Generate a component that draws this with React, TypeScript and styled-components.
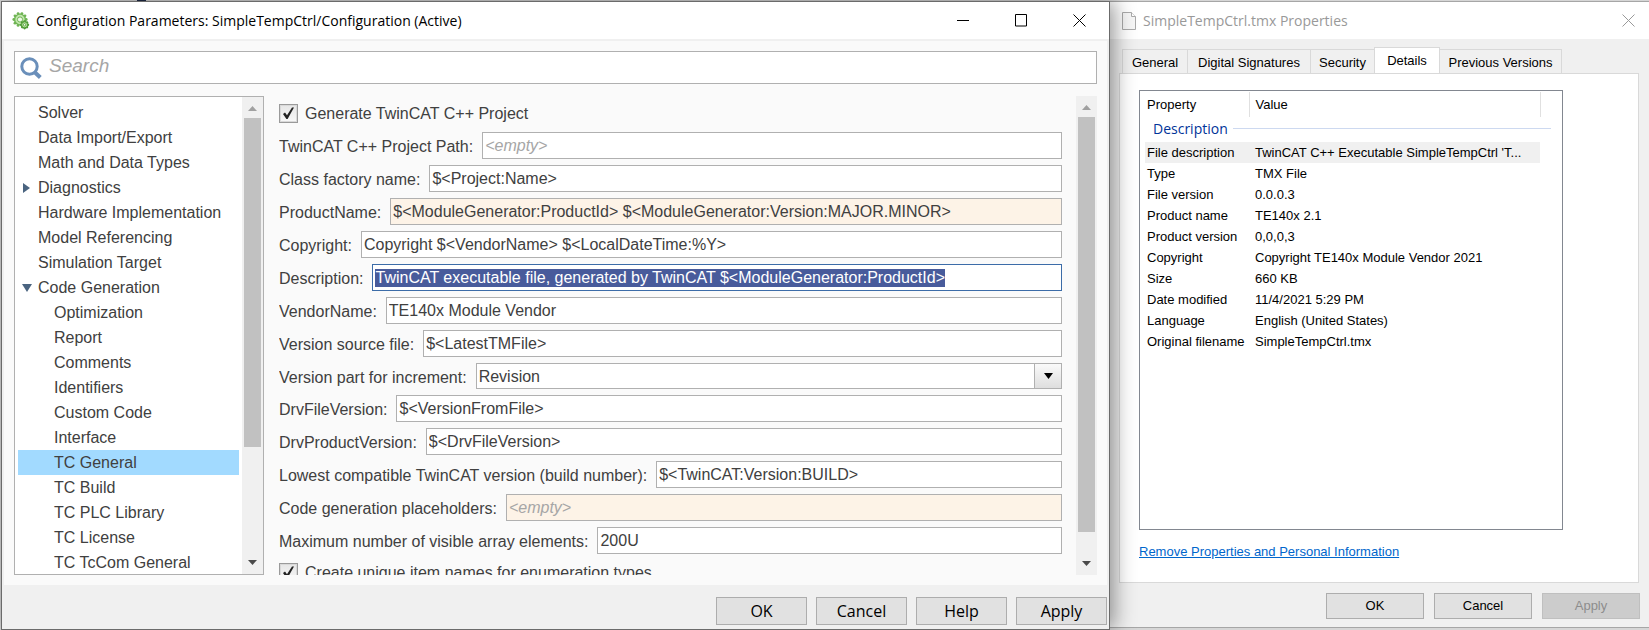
import React, { useEffect, useRef } from "react";
import styled, { createGlobalStyle, css } from "styled-components";

const uiFont = `"Open Sans", "Noto Sans", sans-serif`;
const textFont = `"Liberation Sans", Arial, sans-serif`;

const GlobalStyle = createGlobalStyle`
  *, *::before, *::after { box-sizing: border-box; }
  body { margin: 0; background: #d6d6d6; font-family: ${textFont}; color: #404040; }
  button, input, select { font-family: inherit; margin: 0; }
`;

const Desktop = styled.div`
  display: flex;
  height: 100vh;
  min-height: 480px;
  padding: 1px 0 0 1px;
  background: linear-gradient(90deg, #d6d6d6 137px, #1f2a48 137px, #1f2a48 146px, #d6d6d6 146px);
`;

/* ---------- shared window parts ---------- */

const Win = styled.section<{ $active?: boolean }>`
  display: flex;
  flex-direction: column;
  min-width: 0;
  background: #f0f0f0;
  ${(p) =>
    p.$active
      ? css`
          flex: 1107 1 0;
          position: relative;
          z-index: 1;
          border: 1px solid #6b6b6b;
          box-shadow: 4px 0 20px rgba(0, 0, 0, 0.42);
        `
      : css`
          flex: 539 1 0;
          border: solid #a6a6a6;
          border-width: 1px 0;
          margin-bottom: 2px;
        `}
`;

const TitleBar = styled.header<{ $active?: boolean }>`
  display: flex;
  align-items: center;
  flex: none;
  height: 37px;
  padding: ${(p) => (p.$active ? "0 16px 0 10px" : "0 7px 0 11px")};
  gap: 6px;
  background: #fff;
  color: ${(p) => (p.$active ? "#000" : "#999")};
`;

const Title = styled.h1`
  flex: 1;
  margin: 0;
  font: 400 14px/20px ${uiFont};
  white-space: nowrap;
`;

const CaptionButtons = styled.div<{ $active?: boolean }>`
  display: flex;
  gap: ${(p) => (p.$active ? 30 : 0)}px;
`;

const CaptionButton = styled.button`
  display: grid;
  place-items: center;
  width: 28px;
  height: 28px;
  padding: 0;
  border: 0;
  background: none;
  color: inherit;
`;

const Footer = styled.footer<{ $active?: boolean }>`
  display: flex;
  flex: none;
  justify-content: flex-end;
  gap: ${(p) => (p.$active ? 9 : 10)}px;
  padding: ${(p) => (p.$active ? "12px 2px 4px" : "10px 9px 8px")};
`;

const PushButton = styled.button<{ $large?: boolean }>`
  width: ${(p) => (p.$large ? 91 : 98)}px;
  height: ${(p) => (p.$large ? 28 : 26)}px;
  padding: 0;
  border: 1px solid #adadad;
  background: #e1e1e1;
  color: #000;
  font: ${(p) => (p.$large ? `400 16px/24px ${uiFont}` : `400 13px/20px ${textFont}`)};
  &:disabled {
    border-color: #bfbfbf;
    background: #ccc;
    color: #8c8c8c;
  }
`;

/* ---------- configuration window ---------- */

const ConfigBody = styled.main`
  display: flex;
  flex-direction: column;
  flex: 1;
  min-height: 0;
  gap: 12px;
  margin: 2px 2px 0;
  padding: 10px;
  background: #fafafa;
`;

const SearchBox = styled.label`
  display: flex;
  align-items: center;
  flex: none;
  height: 33px;
  padding: 0 5px;
  gap: 7px;
  border: 1px solid #b0b0b0;
  background: #fff;
`;

const SearchInput = styled.input`
  flex: 1;
  min-width: 0;
  padding: 0 0 4px;
  border: 0;
  outline: 0;
  background: none;
  font-size: 19px;
  line-height: 24px;
  &::placeholder { color: #a6a6a6; font-style: italic; opacity: 1; }
`;

const Columns = styled.div`
  display: flex;
  flex: 1;
  min-height: 0;
  gap: 15px;
`;

const TreePane = styled.nav`
  display: flex;
  flex: none;
  width: 250px;
  border: 1px solid #b0b0b0;
  background: #fff;
`;

const TreeList = styled.ul`
  flex: 1;
  margin: 0;
  padding: 3px;
  list-style: none;
  overflow: hidden;
`;

const TreeItem = styled.li<{ $child?: boolean; $selected?: boolean }>`
  display: flex;
  align-items: center;
  height: 25px;
  padding-left: ${(p) => (p.$child ? 36 : 4)}px;
  background: ${(p) => (p.$selected ? "#a2daff" : "none")};
  font-size: 16px;
  line-height: 24px;
  white-space: nowrap;
`;

const Twisty = styled.svg`
  width: 12px;
  height: 12px;
  margin-right: 4px;
  flex: none;
  fill: #4a6480;
`;

const ScrollTrack = styled.div`
  display: flex;
  flex-direction: column;
  align-items: center;
  flex: none;
  width: 21px;
  background: #f0f0f0;
`;

const ScrollArrow = styled.svg`
  display: block;
  flex: none;
  width: 11px;
  height: 21px;
`;

const ScrollThumb = styled.div<{ $size: number }>`
  flex: ${(p) => p.$size} 0 0;
  width: 17px;
  background: #c1c1c1;
`;

const ScrollRest = styled.div<{ $size: number }>`
  flex: ${(p) => p.$size} 0 0;
`;

const FormPane = styled.form`
  display: flex;
  flex: 1;
  min-width: 0;
  gap: 14px;
`;

const FieldList = styled.div`
  display: flex;
  flex-direction: column;
  flex: 1;
  gap: 6px;
  min-width: 0;
  padding-top: 5px;
  overflow: hidden;
`;

const CheckRow = styled.label`
  display: flex;
  align-items: center;
  flex: none;
  gap: 7px;
  height: 25px;
  font-size: 16px;
  line-height: 24px;
`;

const CheckBox = styled.input`
  appearance: none;
  flex: none;
  width: 19px;
  height: 19px;
  border: 1px solid #9a9a9a;
  box-shadow: inset 0 0 0 1px #d9d9d9;
  background: linear-gradient(#e6e6e6, #f8f8f8);
`;

const CheckFrame = styled.span`
  display: grid;
  > * { grid-area: 1 / 1; }
  > svg { pointer-events: none; }
`;

const Field = styled.div`
  display: flex;
  flex: none;
  gap: 9px;
`;

const FieldLabel = styled.label`
  flex: none;
  height: 26px;
  padding-top: 3px;
  font-size: 16px;
  line-height: 23px;
  white-space: nowrap;
`;

const TextBox = styled.input<{ $tinted?: boolean }>`
  flex: 1;
  min-width: 0;
  height: 27px;
  padding: 0 2px;
  border: 1px solid #b0b0b0;
  outline: 0;
  background: ${(p) => (p.$tinted ? "#fdf3e7" : "#fff")};
  color: #404040;
  font-size: 16px;
  &::placeholder { color: #a6a6a6; font-style: italic; opacity: 1; }
  &:focus { border-color: #3c6ca8; }
  &::selection { background: rgba(70, 89, 154, 0.99); color: #fff; }
`;

const SelectFrame = styled.div`
  display: grid;
  grid-template-columns: 1fr 27px;
  flex: 1;
  height: 26px;
  > select { grid-area: 1 / 1 / 2 / 3; }
  > svg { grid-area: 1 / 2; place-self: center; pointer-events: none; }
`;

const Select = styled.select`
  appearance: none;
  min-width: 0;
  padding: 0 30px 0 2px;
  border: 1px solid #b0b0b0;
  border-radius: 0;
  outline: 0;
  background:
    linear-gradient(#b0b0b0, #b0b0b0) right 26px top / 1px 100% no-repeat,
    linear-gradient(#fafafa, #dedede) right / 26px 100% no-repeat,
    #fff;
  color: #404040;
  font-size: 16px;
`;

/* ---------- properties window ---------- */

const PropsBody = styled.main`
  display: flex;
  flex-direction: column;
  flex: 1;
  min-height: 0;
  padding: 8px 10px 0 9px;
`;

const TabStrip = styled.div`
  display: flex;
  align-items: flex-end;
  flex: none;
  padding-left: 3px;
`;

const Tab = styled.button<{ $width: number; $current?: boolean }>`
  width: ${(p) => p.$width}px;
  height: ${(p) => (p.$current ? 27 : 24)}px;
  margin: ${(p) => (p.$current ? "0 0 -1px -1px" : "0 0 0 -1px")};
  padding: ${(p) => (p.$current ? "0 0 1px" : "3px 0 0")};
  border: 1px solid #d9d9d9;
  border-bottom: 0;
  background: ${(p) => (p.$current ? "#fff" : "#f0f0f0")};
  color: #000;
  font: 400 13px/20px ${textFont};
  white-space: nowrap;
  &:first-child { margin-left: 0; }
`;

const TabPage = styled.div`
  display: flex;
  flex-direction: column;
  align-items: stretch;
  flex: 1;
  min-height: 0;
  padding: 16px 75px 20px 19px;
  border: 1px solid #d9d9d9;
  background: #fff;
`;

const ListBox = styled.div`
  flex: 1;
  min-height: 0;
  padding: 1px 11px 0 5px;
  border: 1px solid #828790;
  overflow: hidden;
`;

const PropTable = styled.table`
  width: 100%;
  table-layout: fixed;
  border-collapse: collapse;
  color: #000;
  font-size: 13px;
  line-height: 20px;
  th, td {
    padding: 0 2px;
    font-weight: 400;
    text-align: left;
    white-space: nowrap;
  }
`;

const HeadCell = styled.th`
  height: 25px;
  &:not(:last-child) { border-right: 1px solid #e0e0e0; }
  &:nth-child(2) { padding-left: 6px; }
`;

const GroupCell = styled.th`
  && { padding: 0 0 0 8px; }
`;

const GroupTitle = styled.span`
  display: flex;
  align-items: center;
  gap: 5px;
  height: 25px;
  padding-bottom: 2px;
  color: #003399;
  font: 400 14px/20px ${uiFont};
  &::after { content: ""; flex: 1; height: 1px; background: #cdd9f0; }
`;

const PropRow = styled.tr<{ $selected?: boolean }>`
  height: 21px;
  > th, > td:nth-child(2) { background: ${(p) => (p.$selected ? "#f0f0f0" : "none")}; }
  > td:nth-child(2) { padding-left: 6px; }
`;

const TextLink = styled.a`
  align-self: flex-start;
  margin-top: 12px;
  color: #0066cc;
  font-size: 13px;
  line-height: 20px;
  white-space: nowrap;
`;

/* ---------- drawings ---------- */

const teeth = (cx: number, cy: number, r: number, n: number) =>
  Array.from({ length: n }, (_, i) => {
    const a = (i * 2 * Math.PI) / n;
    return <circle key={i} cx={cx + r * Math.cos(a)} cy={cy + r * Math.sin(a)} r="1.4" />;
  });

const GearIcon = () => (
  <svg width="18" height="18" viewBox="0 0 18 18" aria-hidden="true">
    <g fill="#6fb454">{teeth(8, 7.5, 6.2, 10)}</g>
    <circle cx="8" cy="7.5" r="5.4" fill="#c3e8ae" stroke="#6fb454" strokeWidth="1.4" />
    <circle cx="8" cy="7.5" r="2.6" fill="#eef8e8" stroke="#6fb454" />
    <g fill="#4d9a35">{teeth(12.6, 12.8, 3.2, 8)}</g>
    <circle cx="12.6" cy="12.8" r="3" fill="#b9e4a0" stroke="#4d9a35" />
    <circle cx="12.6" cy="12.8" r="1.2" fill="#fff" stroke="#4d9a35" strokeWidth=".8" />
  </svg>
);

const SearchIcon = () => (
  <svg width="22" height="22" viewBox="0 0 22 22" fill="none" stroke="#6a8fba" aria-hidden="true">
    <circle cx="9.5" cy="9.5" r="7.7" strokeWidth="3" />
    <path d="M15 15.5l5.3 5" strokeWidth="4" />
  </svg>
);

const FileIcon = () => (
  <svg width="16" height="20" viewBox="0 0 16 20" fill="#f7f7f7" stroke="#aaa" aria-hidden="true">
    <path d="M1.500 1.500h9l4 4v13h-13z" />
    <path d="M10.500 1.500v4h4" fill="#fff" />
  </svg>
);

const Minimize = () => (
  <svg width="12" height="13" stroke="currentColor" aria-hidden="true"><path d="M0 6.5h12" /></svg>
);
const Maximize = () => (
  <svg width="12" height="13" fill="none" stroke="currentColor" aria-hidden="true"><path d="M.5.5h11v11.5h-11z" /></svg>
);
const Close = () => (
  <svg width="13" height="13" stroke="currentColor" aria-hidden="true"><path d="M.5.5l12 12M12.5.5l-12 12" /></svg>
);

const Tick = () => (
  <svg width="19" height="19" viewBox="0 0 19 19" aria-hidden="true">
    <path d="M4 10l2-1.4 2 2.6L13 3.5h2L8.600 15H7.400z" fill="#222" />
  </svg>
);

const ScrollBar = ({ thumb, rest }: { thumb: number; rest: number }) => (
  <ScrollTrack aria-hidden="true">
    <ScrollArrow><path d="M1 14h9L5.500 9z" fill="#a0a0a0" /></ScrollArrow>
    <ScrollThumb $size={thumb} />
    <ScrollRest $size={rest} />
    <ScrollArrow><path d="M1 7h9L5.500 12z" fill="#4a4a4a" /></ScrollArrow>
  </ScrollTrack>
);

/* ---------- data ---------- */

type Node = { text: string; child?: boolean; open?: boolean; selected?: boolean };

const tree: Node[] = [
  { text: "Solver" },
  { text: "Data Import/Export" },
  { text: "Math and Data Types" },
  { text: "Diagnostics", open: false },
  { text: "Hardware Implementation" },
  { text: "Model Referencing" },
  { text: "Simulation Target" },
  { text: "Code Generation", open: true },
  { text: "Optimization", child: true },
  { text: "Report", child: true },
  { text: "Comments", child: true },
  { text: "Identifiers", child: true },
  { text: "Custom Code", child: true },
  { text: "Interface", child: true },
  { text: "TC General", child: true, selected: true },
  { text: "TC Build", child: true },
  { text: "TC PLC Library", child: true },
  { text: "TC License", child: true },
  { text: "TC TcCom General", child: true },
];

type FieldSpec = { label: string; value?: string; tinted?: boolean; focus?: boolean; options?: string[] };

const fields: FieldSpec[] = [
  { label: "TwinCAT C++ Project Path:" },
  { label: "Class factory name:", value: "$<Project:Name>" },
  { label: "ProductName:", value: "$<ModuleGenerator:ProductId> $<ModuleGenerator:Version:MAJOR.MINOR>", tinted: true },
  { label: "Copyright:", value: "Copyright $<VendorName> $<LocalDateTime:%Y>" },
  { label: "Description:", value: "TwinCAT executable file, generated by TwinCAT $<ModuleGenerator:ProductId>", focus: true },
  { label: "VendorName:", value: "TE140x Module Vendor" },
  { label: "Version source file:", value: "$<LatestTMFile>" },
  { label: "Version part for increment:", options: ["Revision"] },
  { label: "DrvFileVersion:", value: "$<VersionFromFile>" },
  { label: "DrvProductVersion:", value: "$<DrvFileVersion>" },
  { label: "Lowest compatible TwinCAT version (build number):", value: "$<TwinCAT:Version:BUILD>" },
  { label: "Code generation placeholders:", tinted: true },
  { label: "Maximum number of visible array elements:", value: "200U" },
];

const tabs = [
  { text: "General", width: 66 },
  { text: "Digital Signatures", width: 124 },
  { text: "Security", width: 65 },
  { text: "Details", width: 66, current: true },
  { text: "Previous Versions", width: 123 },
];

const properties = [
  ["File description", "TwinCAT C++ Executable SimpleTempCtrl 'T..."],
  ["Type", "TMX File"],
  ["File version", "0.0.0.3"],
  ["Product name", "TE140x 2.1"],
  ["Product version", "0,0,0,3"],
  ["Copyright", "Copyright TE140x Module Vendor 2021"],
  ["Size", "660 KB"],
  ["Date modified", "11/4/2021 5:29 PM"],
  ["Language", "English (United States)"],
  ["Original filename", "SimpleTempCtrl.tmx"],
];

/* ---------- composition ---------- */

const Check = ({ children }: { children: string }) => (
  <CheckRow>
    <CheckFrame>
      <CheckBox type="checkbox" defaultChecked />
      <Tick />
    </CheckFrame>
    {children}
  </CheckRow>
);

const FormField = ({ spec, id }: { spec: FieldSpec; id: string }) => {
  const box = useRef<HTMLInputElement>(null);
  useEffect(() => {
    if (spec.focus && box.current) {
      box.current.focus();
      box.current.select();
    }
  }, [spec.focus]);
  return (
    <Field>
      <FieldLabel htmlFor={id}>{spec.label}</FieldLabel>
      {spec.options ? (
        <SelectFrame>
          <Select id={id}>
            {spec.options.map((o) => <option key={o}>{o}</option>)}
          </Select>
          <svg width="9" height="6" aria-hidden="true"><path d="M0 0h9L4.500 6z" fill="#000" /></svg>
        </SelectFrame>
      ) : (
        <TextBox ref={box} id={id} type="text" spellCheck={false} defaultValue={spec.value} placeholder="<empty>" $tinted={spec.tinted} />
      )}
    </Field>
  );
};

const ConfigWindow = () => (
  <Win $active aria-label="Configuration Parameters">
    <TitleBar $active>
      <GearIcon />
      <Title>Configuration Parameters: SimpleTempCtrl/Configuration (Active)</Title>
      <CaptionButtons $active>
        <CaptionButton aria-label="Minimize"><Minimize /></CaptionButton>
        <CaptionButton aria-label="Maximize"><Maximize /></CaptionButton>
        <CaptionButton aria-label="Close"><Close /></CaptionButton>
      </CaptionButtons>
    </TitleBar>
    <ConfigBody>
      <SearchBox>
        <SearchIcon />
        <SearchInput type="text" placeholder="Search" aria-label="Search" />
      </SearchBox>
      <Columns>
        <TreePane aria-label="Parameter groups">
          <TreeList>
            {tree.map((n) => (
              <TreeItem key={n.text} $child={n.child} $selected={n.selected}>
                {!n.child && (
                  <Twisty viewBox="0 0 12 12">
                    {n.open === false && <path d="M1 1v10l7-5z" />}
                    {n.open && <path d="M0 2h10l-5 8z" />}
                  </Twisty>
                )}
                {n.text}
              </TreeItem>
            ))}
          </TreeList>
          <ScrollBar thumb={329} rest={106} />
        </TreePane>
        <FormPane>
          <FieldList>
            <Check>Generate TwinCAT C++ Project</Check>
            {fields.map((f, i) => <FormField key={f.label} spec={f} id={`field-${i}`} />)}
            <Check>Create unique item names for enumeration types</Check>
          </FieldList>
          <ScrollBar thumb={415} rest={22} />
        </FormPane>
      </Columns>
    </ConfigBody>
    <Footer $active>
      {["OK", "Cancel", "Help", "Apply"].map((t) => <PushButton key={t} $large>{t}</PushButton>)}
    </Footer>
  </Win>
);

const PropertiesWindow = () => (
  <Win aria-label="File properties">
    <TitleBar>
      <FileIcon />
      <Title>SimpleTempCtrl.tmx Properties</Title>
      <CaptionButtons>
        <CaptionButton aria-label="Close"><Close /></CaptionButton>
      </CaptionButtons>
    </TitleBar>
    <PropsBody>
      <TabStrip role="tablist">
        {tabs.map((t) => (
          <Tab key={t.text} role="tab" aria-selected={!!t.current} $width={t.width} $current={t.current}>{t.text}</Tab>
        ))}
      </TabStrip>
      <TabPage>
        <ListBox>
          <PropTable>
            <colgroup>
              <col style={{ width: 104 }} />
              <col />
              <col style={{ width: 11 }} />
            </colgroup>
            <thead>
              <tr><HeadCell>Property</HeadCell><HeadCell>Value</HeadCell><HeadCell /></tr>
            </thead>
            <tbody>
              <tr><GroupCell colSpan={3}><GroupTitle>Description</GroupTitle></GroupCell></tr>
              {properties.map(([name, value], i) => (
                <PropRow key={name} $selected={i === 0}>
                  <th scope="row">{name}</th>
                  <td>{value}</td>
                  <td />
                </PropRow>
              ))}
            </tbody>
          </PropTable>
        </ListBox>
        <TextLink href="#">Remove Properties and Personal Information</TextLink>
      </TabPage>
    </PropsBody>
    <Footer>
      <PushButton>OK</PushButton>
      <PushButton>Cancel</PushButton>
      <PushButton disabled>Apply</PushButton>
    </Footer>
  </Win>
);

export default function App() {
  return (
    <>
      <GlobalStyle />
      <Desktop>
        <ConfigWindow />
        <PropertiesWindow />
      </Desktop>
    </>
  );
}
